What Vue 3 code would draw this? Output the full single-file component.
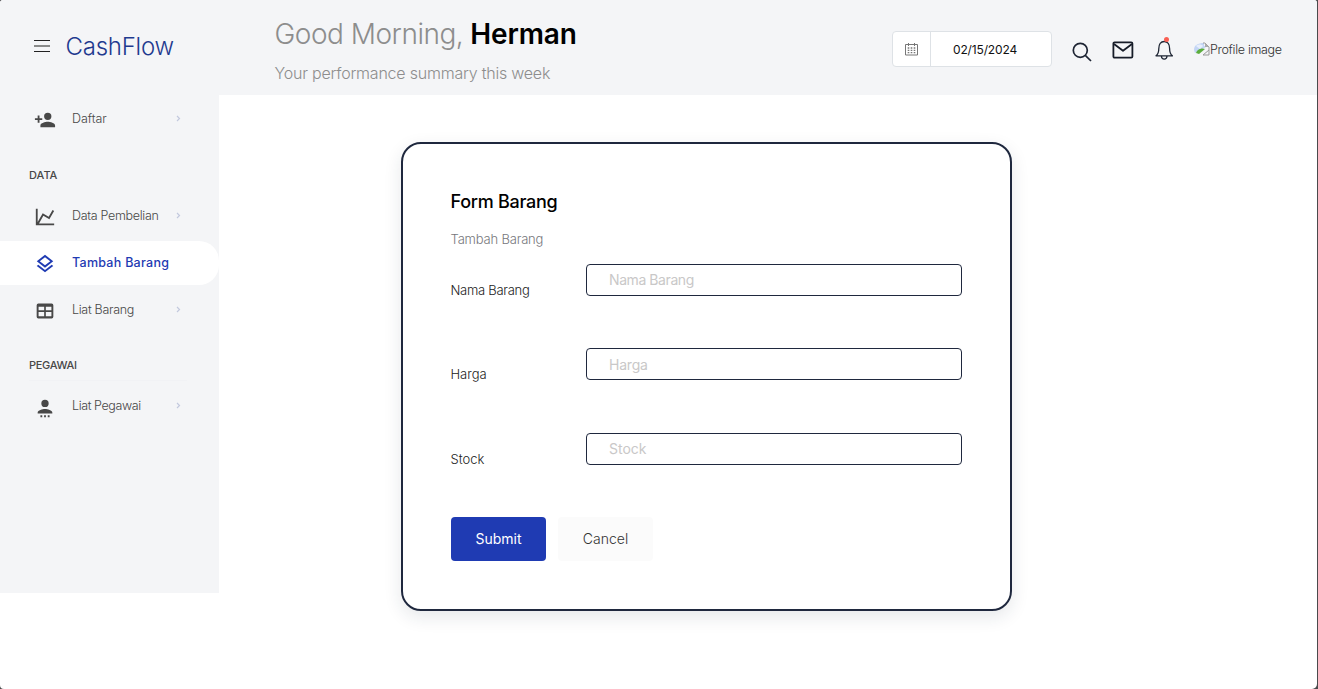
<script setup>
const top = [{ id: 'daftar', label: 'Daftar', icon: 'add' }]
const data = [
  { id: 'pembelian', label: 'Data Pembelian', icon: 'chart' },
  { id: 'tambah', label: 'Tambah Barang', icon: 'layers', active: true },
  { id: 'barang', label: 'Liat Barang', icon: 'table' }
]
const staff = [{ id: 'pegawai', label: 'Liat Pegawai', icon: 'person' }]
const groups = [
  { id: 'g1', items: top },
  { id: 'g2', title: 'DATA', items: data },
  { id: 'g3', title: 'PEGAWAI', items: staff }
]
const icons = {
  add: 'M15,14C12.33,14 7,15.33 7,18V20H23V18C23,15.33 17.67,14 15,14M6,10V7H4V10H1V12H4V15H6V12H9V10M15,12A4,4 0 0,0 19,8A4,4 0 0,0 15,4A4,4 0 0,0 11,8A4,4 0 0,0 15,12Z',
  chart: 'M16,11.78L20.24,4.45L21.97,5.45L16.74,14.5L10.23,10.75L5.46,19H22V21H2V3H4V17.54L9.5,8L16,11.78Z',
  layers: 'M12,18.54L19.37,12.8L21,14.07L12,21.07L3,14.07L4.62,12.81L12,18.54M12,16L3,9L12,2L21,9L12,16M12,4.53L6.26,9L12,13.47L17.74,9L12,4.53Z',
  table: 'M4,3H20A2,2 0 0,1 22,5V19A2,2 0 0,1 20,21H4A2,2 0 0,1 2,19V5A2,2 0 0,1 4,3M4.300,7V11H11V7H4.300M13,7V11H19.700V7H13M4.300,13.200V18.400H11V13.200H4.300M13,13.200V18.400H19.700V13.200H13Z',
  person: 'M12 13C14.67 13 20 14.33 20 17V18H4V17C4 14.33 9.33 13 12 13M12 3A4 4 0 1 1 12 11A4 4 0 0 1 12 3M7 20H9V22H7ZM11 20H13V22H11ZM15 20H17V22H15Z'
}
const fields = [
  { id: 'nama', label: 'Nama Barang' },
  { id: 'harga', label: 'Harga' },
  { id: 'stock', label: 'Stock' }
]
</script>

<template>
  <div class="window">
    <header class="navbar">
      <div class="brand">
        <svg class="burger" width="16" height="14" viewBox="0 0 16 14" stroke="#222">
          <path d="M0 1.500h16M0 12.500h16" stroke-width="1.100" /><path d="M0 7h16" stroke="#666" stroke-width="1.700" />
        </svg>
        <span class="logo">CashFlow</span>
      </div>
      <div class="greeting">
        <h1><span class="hello">Good Morning,</span><b>Herman</b></h1>
        <p><span>Your performance summary this week</span></p>
      </div>
      <div class="tools">
        <div class="date">
          <span class="date-icon">
            <svg width="13" height="13" viewBox="0 0 13 13" fill="none" stroke="#777">
              <path d="M.5 1.500h12v10.500H.5zM3.500 0v3M9.500 0v3" />
              <path d="M2.700 5h8M2.700 7.300h8M2.700 9.600h8" stroke-width="1.300" stroke-dasharray="1.600 1.400" />
            </svg>
          </span>
          <span class="date-value"><span>02/15/2024</span></span>
        </div>
        <svg class="search" width="20" height="20" viewBox="0 0 20 20" fill="none" stroke="#1d2433" stroke-width="1.700">
          <circle cx="8.300" cy="8.300" r="7" /><path d="M13.300 13.300L19 19" />
        </svg>
        <svg class="mail" width="22" height="18" viewBox="0 0 22 18" fill="none" stroke="#161c28" stroke-width="1.800" stroke-linejoin="round">
          <rect x="1.400" y="1.400" width="19" height="15.200" rx="1.200" /><path d="M2 3l9 6.800L20 3" />
        </svg>
        <span class="bell">
          <svg width="20" height="22" viewBox="0 0 20 22" fill="none" stroke="#1d2433" stroke-width="1.300" stroke-linejoin="round">
            <path d="M2 16.800c2-1.500 2.800-4 2.800-7.300 0-4 2-7 5.400-7s5.400 3 5.400 7c0 3.300.8 5.800 2.800 7.300zM7.400 17.300c.3 3.800 5.300 3.800 5.600 0" />
          </svg>
          <i class="dot"></i>
        </span>
        <span class="profile">
          <svg width="16" height="16" viewBox="0 0 16 16">
            <path d="M0 9C0 4 4 2 10 2v3h4L1 12z" fill="#c3d5f5" />
            <path d="M2 12C4 7 9 7 11 8L5 13z" fill="#5bad3d" />
            <path d="M9 2h2l4 4v3M15 9L9 14h6V9" fill="none" stroke="#999" />
            <path d="M11 2v4h4z" fill="#aaa" />
            <path d="M2 5c2-2 6-2 7 0l-3 3z" fill="#fff" opacity=".6" />
          </svg>
          <span class="alt">Profile image</span>
        </span>
      </div>
    </header>

    <div class="body">
      <nav class="sidebar">
        <section v-for="g in groups" :key="g.id" :class="g.id">
          <h2 v-if="g.title"><span>{{ g.title }}</span></h2>
          <a v-for="n in g.items" :key="n.id" class="item" :class="{ active: n.active }">
            <svg class="icon" :class="n.icon" viewBox="0 0 24 24"><path :d="icons[n.icon]" fill="currentColor" fill-rule="evenodd" /></svg>
            <span class="label">{{ n.label }}</span>
            <svg v-if="!n.active" class="chevron" width="5" height="7" viewBox="0 0 5 7"><path d="M1 1L3.500 3.500L1 6" fill="none" stroke="#c3c9de" stroke-width="1.200" /></svg>
          </a>
        </section>
      </nav>

      <main>
        <form class="card" @submit.prevent>
          <h3><span>Form Barang</span></h3>
          <p class="desc"><span>Tambah Barang</span></p>
          <div v-for="f in fields" :key="f.id" class="row" :class="f.id">
            <label :for="f.id"><span>{{ f.label }}</span></label>
            <input :id="f.id" type="text" :placeholder="f.label" />
          </div>
          <div class="actions">
            <button class="submit">Submit</button>
            <button class="cancel" type="button">Cancel</button>
          </div>
        </form>
      </main>
    </div>
  </div>
</template>

<style>
body { margin: 0; background: #4a4a4c; }
</style>

<style scoped>
* { box-sizing: border-box; }
.window { width: 1317px; height: 689px; background: #fff; border-radius: 3px 3px 5px 4px; overflow: hidden; font-family: Inter, "Liberation Sans", sans-serif; font-weight: 300; color: #484848; }
h1, h2, h3, p { margin: 0; font-weight: inherit; }
.navbar { height: 95px; background: #f4f5f7; display: flex; }
.brand { width: 274.500px; flex: none; display: flex; padding: 32px 0 0 34px; }
.burger { margin: 7px 15.500px 0 0; }
.logo { font-size: 24px; line-height: 29px; color: #1f3a8f; letter-spacing: -.25px; }
.greeting { flex: 1; }
h1 { font-size: 28px; line-height: 34px; margin-top: 17px; color: #8d8d8d; white-space: pre; display: flex; gap: 7px; }
.hello { letter-spacing: -.5px; font-weight: 350; }
h1 b { font-weight: 600; color: #000; letter-spacing: -.1px; }
.greeting p { font-size: 16px; line-height: 20px; margin-top: 12px; color: #8d8d8d; letter-spacing: -.22px; font-weight: 350; }
.tools { display: flex; align-items: flex-start; padding-right: 35px; }
.date { width: 160px; height: 36px; margin-top: 31px; border: 1px solid #dee2e6; border-radius: 4px; background: #fff; display: flex; }
.date-icon { width: 38px; border-right: 1px solid #dee2e6; display: flex; align-items: center; justify-content: center; }
.date-value { flex: 1; display: flex; align-items: center; justify-content: center; font-size: 12px; font-weight: 400; color: #111; padding-right: 12px; letter-spacing: -.15px; }
.search { margin: 42px 0 0 20px; }
.mail { margin: 41px 0 0 20px; }
.bell { position: relative; height: 22px; margin: 39px 0 0 20px; }
.bell svg { display: block; }
.dot { position: absolute; left: 10px; top: -2px; width: 5px; height: 5px; border-radius: 50%; background: #f95f53; }
.profile { margin: 41px 0 0 20px; height: 17px; width: 88px; display: flex; align-items: center; white-space: nowrap; font-size: 12.500px; color: #333; letter-spacing: -.32px; }
.profile svg { flex: none; margin-top: -2px; }
.body { display: flex; align-items: flex-start; }
.sidebar { width: 219px; height: 498px; background: #f4f5f7; padding-top: 2px; }
.item { height: 44px; margin-bottom: 3px; display: flex; align-items: center; padding: 0 0 2px 34px; letter-spacing: -.3px; }
.g1 .item { letter-spacing: -.05px; }
.g3 .item { letter-spacing: -.4px; }
.item.active { background: #fff; border-radius: 0 20px 20px 0; color: #1f3bb3; font-weight: 500; letter-spacing: .27px; }
.icon { width: 22px; height: 22px; margin: 3px 16px 0 0; }
.icon.table { width: 20px; height: 20px; margin-left: 1px; margin-right: 17px; }
.icon.person { margin-top: 5px; }
.label { font-size: 12.500px; width: 104px; white-space: nowrap; }
.chevron { margin-top: 1px; }
h2 { font-size: 11px; font-weight: 500; line-height: 14px; padding-left: 29px; }
.g2 h2 { padding-top: 24px; margin-bottom: 12px; }
.g3 h2 { padding-top: 23px; margin-bottom: 12px; letter-spacing: -.3px; }
.g3 h2::after { content: ""; display: block; width: 158px; height: 1px; margin: 8px 0 -9px; background: #f1f2f5; }
main { flex: 1; padding: 47px 0 0 182px; }
.card { width: 611px; height: 469px; border: 2px solid #1f283e; border-radius: 20px; padding: 47px 48px; box-shadow: 0 6px 18px rgba(31, 45, 61, .11); }
h3 { font-size: 18px; line-height: 22px; font-weight: 500; color: #000; letter-spacing: -.28px; margin-left: -.5px; }
.desc { font-size: 13px; line-height: 18px; color: #76777c; margin: 17px 0 16px -.5px; letter-spacing: -.18px; }
.row { height: 32px; display: flex; margin-bottom: 52.400px; }
.row label { width: 135.500px; flex: none; margin-left: -.5px; font-size: 13px; line-height: 18px; padding-top: 17px; color: #222; white-space: nowrap; }
.row.nama label { letter-spacing: -.27px; }
.row input { width: 376px; height: 32px; border: 1px solid #1f283e; border-radius: 4px; padding: 0 22px 1px; font: 400 14px Inter, sans-serif; background: #fff; }
.row.nama input { letter-spacing: -.42px; }
.row.harga input { letter-spacing: -.2px; padding-bottom: 0; }
.row input::placeholder { color: #c9c8c8; opacity: 1; }
.actions { display: flex; gap: 12px; }
button { width: 95px; height: 44px; border: 0; border-radius: 4px; padding: 0 0 2px; font: 400 14px Inter, sans-serif; }
.submit { background: #1f3bb3; color: #fff; }
.cancel { background: #fbfbfb; color: #333; font-weight: 300; }
</style>
